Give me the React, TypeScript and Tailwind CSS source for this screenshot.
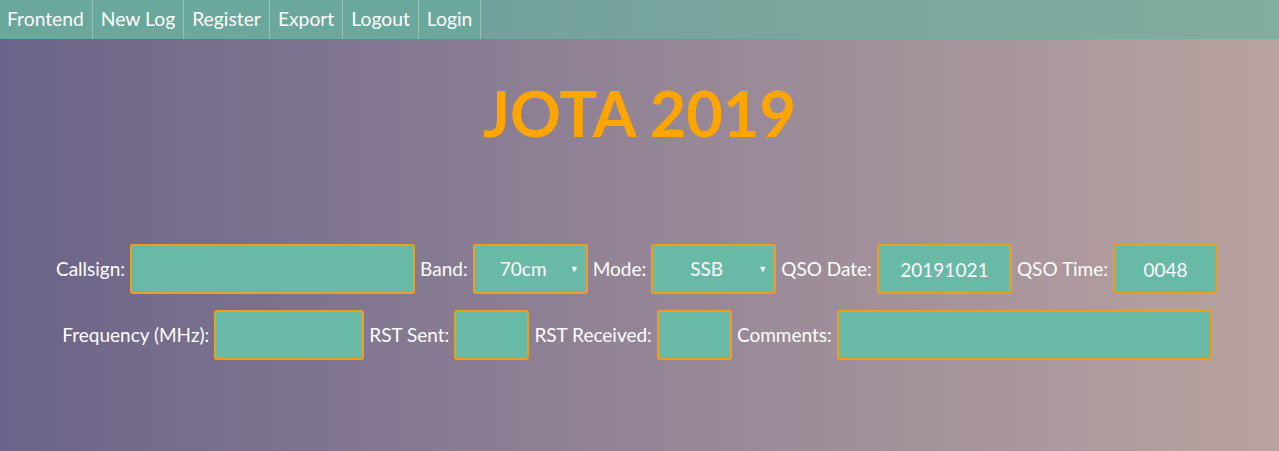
import React from 'react'

const font = { fontFamily: 'Lato, "Open Sans", sans-serif' }

const navItems = ['Frontend', 'New Log', 'Register', 'Export', 'Logout', 'Login']

function Field({ label, width, value }: { label: string; width: string; value?: string }) {
  return (
    <>
      <label className="text-white text-[19px] mr-[5px]">{label}</label>
      <input
        readOnly
        value={value ?? ''}
        className={`${width} h-[50px] bg-[#69b9a7] border-2 border-[#e9a020] rounded-[3px] text-white text-[19px] text-center outline-none mr-[5px]`}
        style={font}
      />
    </>
  )
}

function SelectField({ label, width, value }: { label: string; width: string; value: string }) {
  return (
    <>
      <label className="text-white text-[19px] mr-[5px]">{label}</label>
      <span className={`relative block ${width} h-[50px] bg-[#69b9a7] border-2 border-[#e9a020] rounded-[3px] mr-[5px]`}>
        <span className="absolute inset-0 flex items-center justify-center pr-[14px] text-white text-[19px]">{value}</span>
        <span className="absolute right-[7px] top-1/2 -translate-y-1/2 text-white text-[9px]">▼</span>
      </span>
    </>
  )
}

export default function App() {
  return (
    <div
      className="w-full h-[451px] bg-gradient-to-r from-[#6b6389] via-[#948596] to-[#b9a3a0] overflow-hidden"
      style={font}
    >
      {/* Nav */}
      <nav className="flex h-[39px] bg-[#6ab2a0]/70">
        {navItems.map((item) => (
          <a
            key={item}
            className="flex items-center px-[8px] first:pl-[7px] bg-[#6aa89c] text-white text-[19.3px] border-r border-white/30"
          >
            {item}
          </a>
        ))}
      </nav>

      <h1 className="text-center text-[#ffa500] font-bold text-[63px] leading-none mt-[42px]">JOTA 2019</h1>

      <div className="mt-[100px]">
        <div className="flex justify-center items-center">
          <Field label="Callsign:" width="w-[285px]" />
          <SelectField label="Band:" width="w-[115px]" value="70cm" />
          <SelectField label="Mode:" width="w-[125px]" value="SSB" />
          <Field label="QSO Date:" width="w-[135px]" value="20191021" />
          <Field label="QSO Time:" width="w-[105px]" value="0048" />
        </div>
        <div className="flex justify-center items-center mt-[16px]">
          <Field label="Frequency (MHz):" width="w-[150px]" />
          <Field label="RST Sent:" width="w-[75px]" />
          <Field label="RST Received:" width="w-[75px]" />
          <Field label="Comments:" width="w-[375px]" />
        </div>
      </div>
    </div>
  )
}
